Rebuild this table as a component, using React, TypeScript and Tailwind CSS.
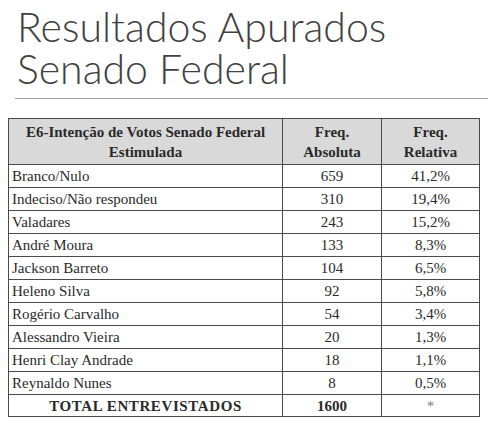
import React from "react";

const rows: [string, string, string][] = [
  ["Branco/Nulo", "659", "41,2%"],
  ["Indeciso/Não respondeu", "310", "19,4%"],
  ["Valadares", "243", "15,2%"],
  ["André Moura", "133", "8,3%"],
  ["Jackson Barreto", "104", "6,5%"],
  ["Heleno Silva", "92", "5,8%"],
  ["Rogério Carvalho", "54", "3,4%"],
  ["Alessandro Vieira", "20", "1,3%"],
  ["Henri Clay Andrade", "18", "1,1%"],
  ["Reynaldo Nunes", "8", "0,5%"],
];

export default function App() {
  return (
    <div className="w-[488px] h-[427px] bg-white overflow-hidden relative">
      <div className="pl-[17px] pt-[6px] text-[41px] leading-[42px] font-light text-[#404040] [font-family:Lato,sans-serif]">
        <div>Resultados Apurados</div>
        <div>Senado Federal</div>
      </div>
      <div className="ml-[15px] mt-[8px] h-px bg-[#a6a6a6]" />
      <div className="ml-[8px] mt-[19px]">
        <table className="border-collapse w-[471px] [font-family:'Liberation_Serif',serif] text-[15px] text-[#2a2a2a] table-fixed">
          <colgroup>
            <col className="w-[274px]" />
            <col className="w-[99px]" />
            <col className="w-[98px]" />
          </colgroup>
          <thead>
            <tr className="bg-[#d9d9d9] h-[46px]">
              <th className="border border-[#4a4a4a] font-bold text-[15px] leading-[20px] text-center align-middle">
                E6-Intenção de Votos Senado Federal
                <br />
                Estimulada
              </th>
              <th className="border border-[#4a4a4a] font-bold text-[15px] leading-[20px] text-center align-middle">
                Freq.
                <br />
                Absoluta
              </th>
              <th className="border border-[#4a4a4a] font-bold text-[15px] leading-[20px] text-center align-middle">
                Freq.
                <br />
                Relativa
              </th>
            </tr>
          </thead>
          <tbody>
            {rows.map(([name, abs, rel]) => (
              <tr key={name} className="h-[23px]">
                <td className="border border-[#4a4a4a] pl-[3px] leading-[20px] align-middle">{name}</td>
                <td className="border border-[#4a4a4a] text-center leading-[20px] align-middle">{abs}</td>
                <td className="border border-[#4a4a4a] text-center leading-[20px] align-middle">{rel}</td>
              </tr>
            ))}
            <tr className="h-[22px]">
              <td className="border border-[#4a4a4a] text-center font-bold text-[15px] tracking-[0.6px] leading-[20px] align-middle">
                TOTAL ENTREVISTADOS
              </td>
              <td className="border border-[#4a4a4a] text-center font-bold text-[15px] leading-[20px] align-middle">
                1600
              </td>
              <td className="border border-[#4a4a4a] text-center text-[#777] leading-[20px] align-middle">*</td>
            </tr>
          </tbody>
        </table>
      </div>
    </div>
  );
}
